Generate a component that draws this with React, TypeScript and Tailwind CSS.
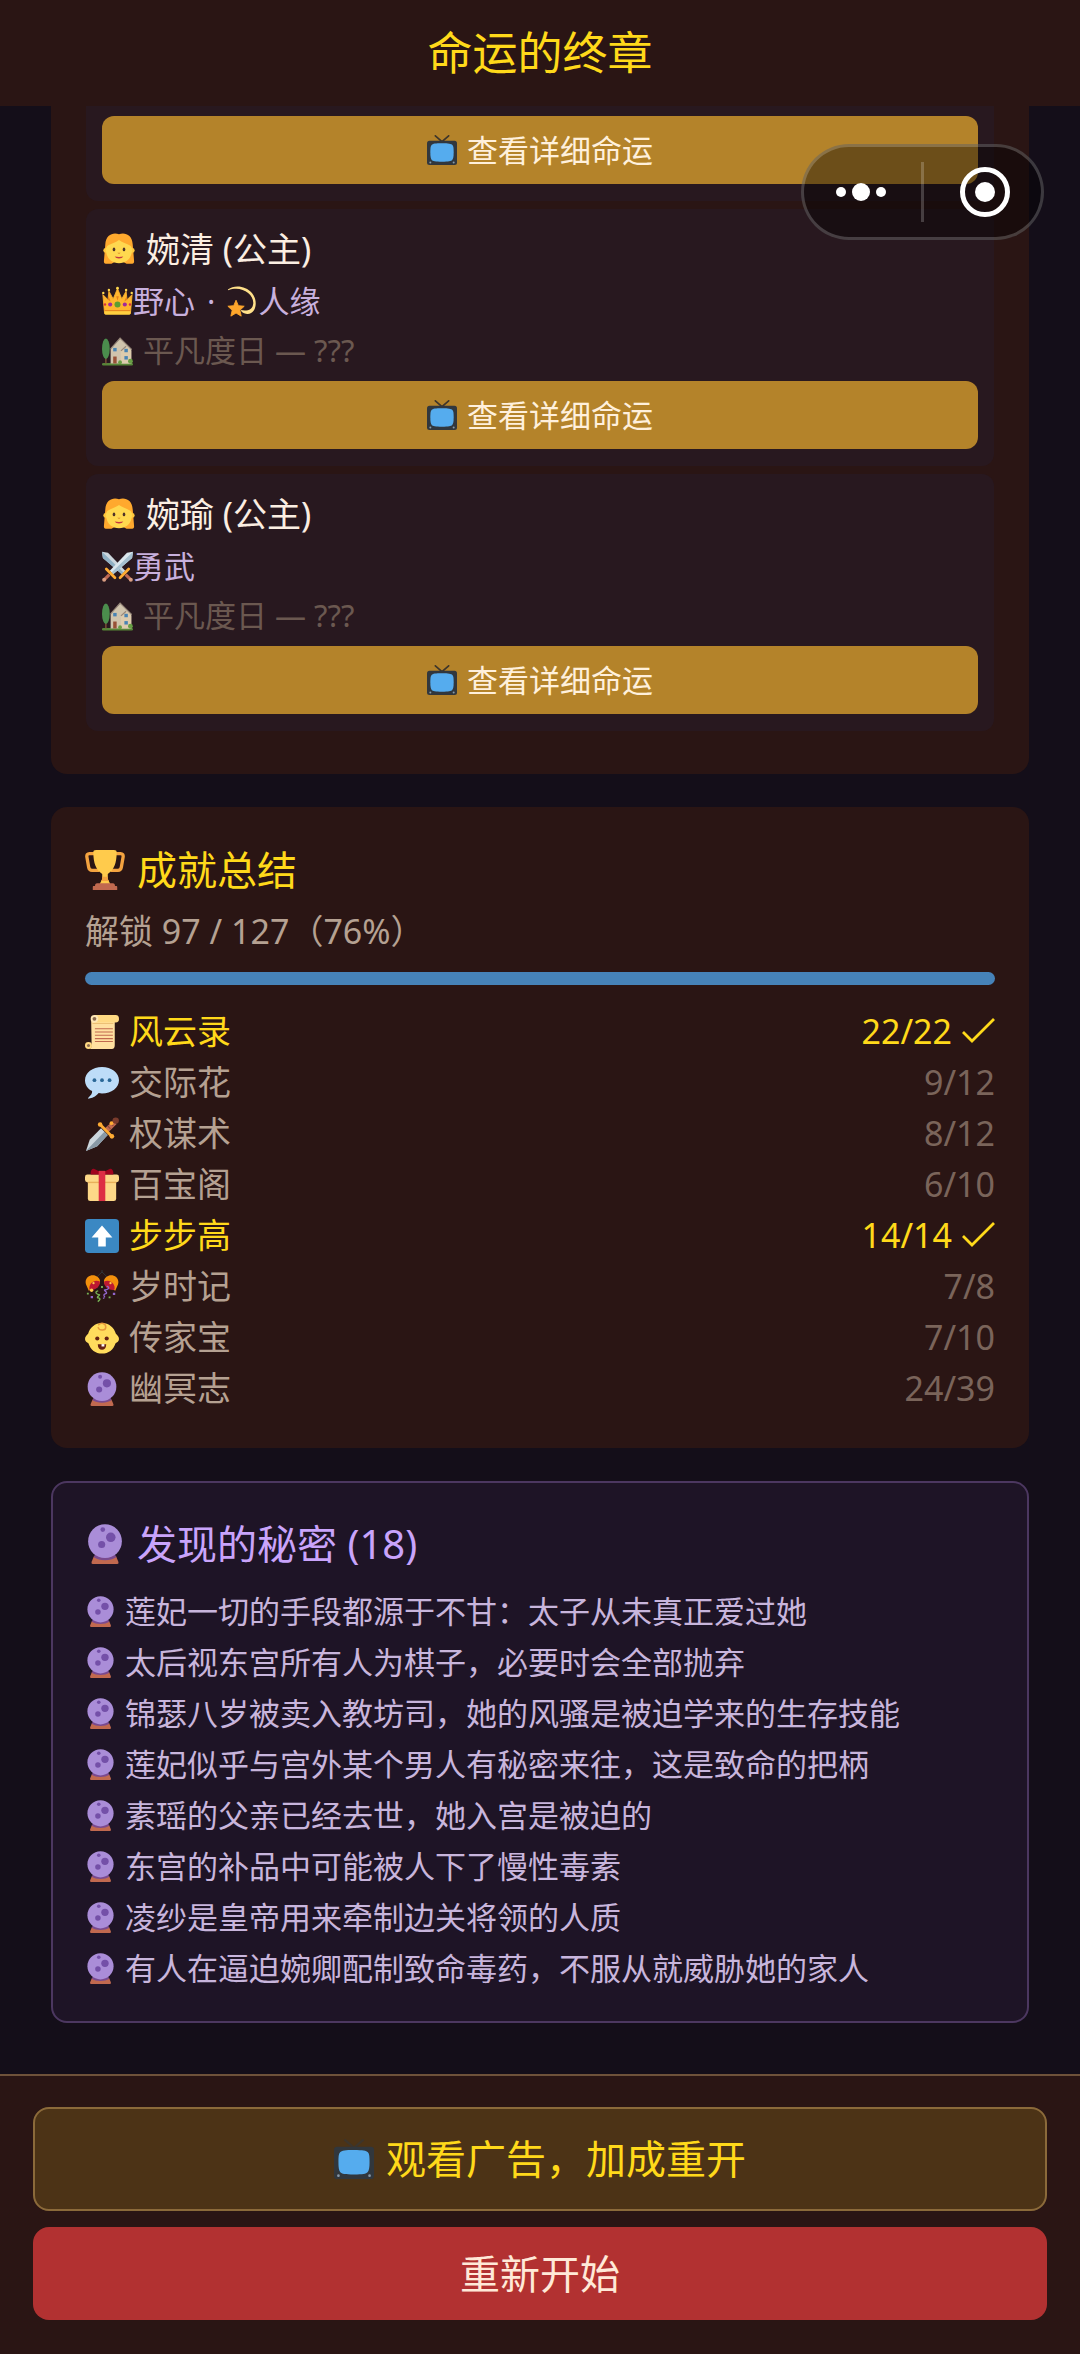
import type { ReactNode } from 'react'
import clsx from 'clsx'

type IconProps = { className?: string }

function Emoji({ className = 'size-[34px]', children }: IconProps & { children: ReactNode }) {
  return (
    <svg viewBox="0 0 36 36" className={clsx('shrink-0', className)} aria-hidden="true">
      {children}
    </svg>
  )
}

function Tv({ className }: IconProps) {
  return (
    <Emoji className={className}>
      <path d="M10 1l8 7 8-7" fill="none" stroke="#3d352b" strokeWidth="2" strokeLinecap="round" />
      <rect x="0" y="7" width="36" height="29" rx="3" fill="#31373d" />
      <path
        d="M18 10c8 0 11 .6 12.500 2S32 16.500 32 21s-.4 7.500-1.800 9S26 32 18 32s-11-.6-12.300-2S4 25.500 4 21s0-7.500 1.500-9S10 10 18 10z"
        fill="#55acee"
      />
      <circle cx="4" cy="33" r="1.200" fill="#8899a6" />
      <circle cx="32" cy="33" r="1.200" fill="#8899a6" />
    </Emoji>
  )
}

function Girl({ className }: IconProps) {
  return (
    <Emoji className={className}>
      <path
        d="M18 2.500C12 0 4 3 3.500 13L2 31c0 1.500.5 2.500 2 2.500h6l8-4 8 4h6c1.500 0 2-1 2-2.500L32.500 13C32 3 24 0 18 2.500z"
        fill="#ffa92e"
      />
      <circle cx="4" cy="19.500" r="2.600" fill="#ffc83d" />
      <circle cx="32" cy="19.500" r="2.600" fill="#ffc83d" />
      <path
        d="M18 8.500C15 11 8 12.500 5 15.500c-1 2-1 4-.500 6.500C6 29 11 33 18 33s12-4 13.500-11c.5-2.500.5-4.500-.5-6.500-3-3-10-4.500-13-7z"
        fill="#ffd84f"
      />
      <ellipse cx="12.700" cy="18.500" rx="1.400" ry="2" fill="#50342a" />
      <ellipse cx="23.300" cy="18.500" rx="1.400" ry="2" fill="#50342a" />
      <path d="M16.200 22h3.600L18 23.300z" fill="#d98b2b" />
      <path d="M13.500 26c2.700.7 6.300.7 9 0-1.200 2.800-7.800 2.800-9 0z" fill="#c5383f" />
    </Emoji>
  )
}

function Crown({ className }: IconProps) {
  return (
    <Emoji className={className}>
      <path
        d="M3 32L1 10l6 6 1-10 5 9 5-12 5 12 5-9 1 10 6-6-2 22z"
        fill="#ffb52e"
        stroke="#ffb52e"
        strokeWidth="1"
        strokeLinejoin="round"
      />
      <path d="M7 12l2 3 1 3-3-2zM29 12l-2 3-1 3 3-2zM16.500 12h3l-1.500 5z" fill="#e4801d" />
      <circle cx="1.500" cy="8" r="1.400" fill="#ffd84f" />
      <circle cx="8" cy="4.500" r="1.400" fill="#ffd84f" />
      <circle cx="18" cy="2.500" r="1.600" fill="#ffd84f" />
      <circle cx="28" cy="4.500" r="1.400" fill="#ffd84f" />
      <circle cx="34.500" cy="8" r="1.400" fill="#ffd84f" />
      <circle cx="18" cy="21.500" r="3.500" fill="#5c9e31" />
      <circle cx="9.500" cy="21.500" r="2.400" fill="#a1299c" />
      <circle cx="26.500" cy="21.500" r="2.400" fill="#a1299c" />
      <circle cx="3.500" cy="21.500" r="1.400" fill="#d8343b" />
      <circle cx="32.500" cy="21.500" r="1.400" fill="#d8343b" />
      <path d="M3 28.500h30V32q0 1.500-1.500 1.500h-27Q3 33.500 3 32z" fill="#ffcf3f" />
      <path d="M3 28h30v1.200H3z" fill="#e4801d" />
    </Emoji>
  )
}

function Dizzy({ className }: IconProps) {
  return (
    <Emoji className={className}>
      <path
        d="M1 4C9-2 22 0 29 8c7.500 9 5 24-5 24.500-4 .2-7-1.500-8-4.500 7 1.500 14 0 14.500-8C31 9 16-1 1.500 5z"
        fill="#ffe08a"
      />
      <path
        d="M10.500 16.500l2.700 6.300 6.800.7-5 4.600 1.500 6.900-6-3.600L4.500 35 6 28.100l-5-4.600 6.800-.7z"
        fill="#ffa62b"
        stroke="#ffa62b"
        strokeLinejoin="round"
      />
    </Emoji>
  )
}

function Swords({ className }: IconProps) {
  return (
    <Emoji className={className}>
      <path d="M0 1l7 1 20 21-4 4L1 8z" fill="#ccd6dd" />
      <path d="M0 1l25 24-2 2L1 8z" fill="#8fb0c4" />
      <path d="M36 1l-7 1L9 23l4 4L35 8z" fill="#dbe7ee" />
      <path d="M36 1L11 25l2 2L35 8z" fill="#a5c0d0" />
      <path d="M5 21l10 10M31 21L21 31" stroke="#ffac33" strokeWidth="3.200" strokeLinecap="round" />
      <path d="M8.500 27.500L3 33M27.500 27.500L33 33" stroke="#bf6952" strokeWidth="3.600" />
      <circle cx="2.500" cy="33.500" r="2.300" fill="#d99e82" />
      <circle cx="33.500" cy="33.500" r="2.300" fill="#d99e82" />
    </Emoji>
  )
}

function House({ className }: IconProps) {
  return (
    <Emoji className={className}>
      <rect x="0" y="32.500" width="36" height="3" rx="1.500" fill="#5c913b" />
      <path d="M4.500 20v13" stroke="#8a5a3c" strokeWidth="1.600" />
      <ellipse cx="4.500" cy="16" rx="4.500" ry="12" fill="#4f9a52" />
      <path d="M10 16L21 4l13 12v17H10z" fill="#e3d7bd" />
      <path d="M22 18l6-5 6 5v15H22z" fill="#f1dfbd" />
      <path d="M10 16L21 3.500 34.500 17M22 18.500l6-5.500" fill="none" stroke="#a39384" strokeWidth="1.400" />
      <rect x="13" y="25" width="4" height="8" fill="#a4583a" />
      <rect x="13" y="15" width="4" height="4" fill="#4c8fc4" />
      <rect x="26" y="16" width="4" height="4" fill="#4c8fc4" />
      <rect x="26" y="24.500" width="4" height="4" fill="#4c8fc4" />
      <circle cx="21" cy="31.500" r="2.200" fill="#6fae4a" />
      <circle cx="33" cy="30.500" r="2.800" fill="#6fae4a" />
    </Emoji>
  )
}

function Trophy({ className }: IconProps) {
  return (
    <Emoji className={className}>
      <path
        d="M10 3.300H4c-1.800 0-2.600 1.200-2.300 3L3.300 15.500c.3 1.700 1.300 2.800 3 2.800H13M26 3.300h6c1.800 0 2.600 1.200 2.300 3l-1.600 9.200c-.3 1.700-1.300 2.800-3 2.800H23"
        fill="none"
        stroke="#f4a340"
        strokeWidth="3"
      />
      <path d="M10 0h16c1.800 0 2.500.6 2.500 2C28.500 12 26 18 20.500 21.500v4.500L23 31H13l2.500-5v-4.500C10 18 7.500 12 7.500 2 7.500.6 8.200 0 10 0z" fill="#ffcb4c" />
      <path d="M15.500 24h5v2l1 2h-7l1-2z" fill="#f4a340" />
      <path d="M11 30h14c1.500 0 2 1 2 2.500h1c.8 0 1 .5 1 1V36H7v-2.500c0-.5.2-1 1-1h1c0-1.500.5-2.500 2-2.500z" fill="#c1694f" />
    </Emoji>
  )
}

function Scroll({ className }: IconProps) {
  return (
    <Emoji className={className}>
      <path d="M6.500 4h25v28c0 2.500-1 4-3 4H4c3 0 3-3 3-5z" fill="#ffe0a0" />
      <circle cx="3.700" cy="32.300" r="3.700" fill="#ffd983" />
      <circle cx="3.700" cy="32.300" r="1.600" fill="#8a6a4f" />
      <path d="M10 0h22.500a3.500 4 0 0 1 0 8H10z" fill="#ffd983" />
      <circle cx="10" cy="4" r="4" fill="#ffe8b6" />
      <circle cx="10" cy="4" r="2" fill="#8a6a4f" />
      <path d="M8 9h22" stroke="#e6b566" strokeWidth=".8" />
      <path d="M10.500 14.500h19M10.500 18h19M10.500 21.500h19M10.500 25h19M10.500 28h19" stroke="#c1694f" strokeWidth="1.200" />
    </Emoji>
  )
}

function Speech({ className }: IconProps) {
  return (
    <Emoji className={className}>
      <path
        d="M18 1C8 1 0 7 0 15c0 5 3 9.500 7.500 11.500.5 2.500-1.500 5-4 7-.5.800 0 1.200.8 1 5-.8 8-3.500 10.200-6 1.100.3 2.300.5 3.500.5 10 0 18-6 18-14S28 1 18 1z"
        fill="#bddcf8"
      />
      <circle cx="10" cy="15" r="2" fill="#2a6797" />
      <circle cx="18" cy="15" r="2" fill="#2a6797" />
      <circle cx="26" cy="15" r="2" fill="#2a6797" />
    </Emoji>
  )
}

function Dagger({ className }: IconProps) {
  return (
    <Emoji className={className}>
      <path d="M1 36l4-12L17 12l7 7L13 31z" fill="#ccd6dd" />
      <path d="M1 36l19.500-20.500L24 19 13 31z" fill="#8899a6" />
      <path d="M21 12l9-8 3.500 3.500L25 16z" fill="#c1694f" />
      <path d="M24 9.500l3 3M27 6.500l3 3" stroke="#8a4b38" strokeWidth="1.200" />
      <circle cx="32.500" cy="3.800" r="3.400" fill="#7a3b2c" />
      <path d="M16.500 8.500L28 20" stroke="#ffac33" strokeWidth="3" />
      <circle cx="16" cy="8" r="2.400" fill="#ffac33" />
      <circle cx="28.500" cy="20.500" r="2.400" fill="#ffac33" />
      <circle cx="28" cy="6.500" r="2" fill="#ffac33" />
    </Emoji>
  )
}

function Gift({ className }: IconProps) {
  return (
    <Emoji className={className}>
      <path d="M3 14h30v18.500q0 2.500-2.500 2.500h-25Q3 35 3 32.500z" fill="#fdd888" />
      <path d="M2.500 7h31Q36 7 36 9.500v3q0 2.500-2.500 2.500h-31Q0 15 0 12.500v-3Q0 7 2.500 7z" fill="#fdd888" />
      <path d="M3 14.500h30V16H3z" fill="#e8b05a" />
      <path d="M6 5c0-3 2-5 4-4l8 4 8-4c2-1 4 1 4 4v2H6z" fill="#a0041e" />
      <path d="M14.500 3h7v32h-7z" fill="#dd2e44" />
    </Emoji>
  )
}

function UpArrow({ className }: IconProps) {
  return (
    <Emoji className={className}>
      <rect width="36" height="36" rx="4" fill="#3b88c3" />
      <path d="M18 7l11 12.500h-7V29h-8v-9.500H7z" fill="#fff" />
    </Emoji>
  )
}

function Confetti({ className }: IconProps) {
  return (
    <Emoji className={className}>
      <path d="M18 0v3M18 2l-5 5M18 2l5 5" stroke="#31373d" strokeWidth="1" fill="none" />
      <path d="M1 15C-1 8 6 4 11 6s6 6 4 9L4 22z" fill="#f4900c" />
      <path d="M5 21c-2-5 4-12 10.500-9C17 17 11 22 5 21z" fill="#be1931" />
      <path d="M35 15c2-7-5-11-10-9s-6 6-4 9l11 7z" fill="#f4900c" />
      <path d="M31 21c2-5-4-12-10.500-9C19 17 25 22 31 21z" fill="#be1931" />
      <circle cx="7" cy="21.500" r="1.800" fill="#ffcc4d" />
      <circle cx="9" cy="14" r="1.200" fill="#ffcc4d" />
      <circle cx="27" cy="14" r="1.200" fill="#ffcc4d" />
      <path d="M14 22c-5 1-1 4 1 4s-4 3-1 3.500 2 2-.5 4" stroke="#77b255" strokeWidth="1.400" fill="none" />
      <path d="M23 17c5 2 0 4-2 4s4 3 1 4-2 2-1 4" stroke="#9266cc" strokeWidth="1.400" fill="none" />
      <path d="M2 24h2v2H2zM17 17h2v2h-2zM25 28h2v2h-2z" fill="#77b255" />
      <path d="M6 27.500h2.500V30H6zM29.500 24H32v2.500h-2.500zM19 29h1.500v1.500H19z" fill="#9266cc" />
    </Emoji>
  )
}

function Baby({ className }: IconProps) {
  return (
    <Emoji className={className}>
      <path d="M18 2c7.500 0 13 5 14.700 11.500C34 15 36 16.500 36 19s-2 3.500-3.600 4.500C30 30.500 25 34.500 18 34.500S6 30.500 3.600 23.500C2 22.500 0 21.500 0 19s2-4 3.300-5.500C5 7 10.500 2 18 2z" fill="#ffdc5d" />
      <path d="M14 7c1 3.500 8 3.500 8-.5C22 2 17 1.500 14.500 4" fill="none" stroke="#e69a3c" strokeWidth="1.600" strokeLinecap="round" />
      <circle cx="13" cy="18.500" r="2.200" fill="#662113" />
      <circle cx="23" cy="18.500" r="2.200" fill="#662113" />
      <path d="M13.500 24.500h9c0 4-2 6-4.500 6s-4.500-2-4.500-6z" fill="#662113" />
      <path d="M17.500 24.500h3v2.500h-3z" fill="#fff" />
    </Emoji>
  )
}

function CrystalBall({ className }: IconProps) {
  return (
    <Emoji className={className}>
      <path d="M8 29h20l2 5c.4 1.300 0 2-1 2H7c-1 0-1.400-.7-1-2z" fill="#c1694f" />
      <path d="M8 30c5 3.500 15 3.500 20 0l-1-3H9z" fill="#7a4a8f" />
      <circle cx="18" cy="15.500" r="15.200" fill="#aa8dd8" />
      <circle cx="23.200" cy="12" r="4.300" fill="#7450a8" />
      <circle cx="15" cy="18.500" r="3.200" fill="#7450a8" />
      <circle cx="16" cy="5" r="2.100" fill="#7450a8" />
    </Emoji>
  )
}

function Check() {
  return (
    <svg viewBox="0 0 34 34" className="size-[34px] shrink-0" role="img" aria-label="✓">
      <path d="M2 17l9 9L33 4" fill="none" stroke="currentColor" strokeWidth="2.800" />
    </svg>
  )
}

function FateButton() {
  return (
    <button
      type="button"
      className="flex h-[68px] w-full items-center justify-center gap-[10px] rounded-xl bg-[#b4832a] text-[31px] text-[#fff0dc]"
    >
      <Tv className="size-[30px]" />
      <span>查看详细命运</span>
    </button>
  )
}

const princesses = [
  { name: '婉清 (公主)', traits: [{ icon: Crown, label: '野心' }, { icon: Dizzy, label: '人缘' }] },
  { name: '婉瑜 (公主)', traits: [{ icon: Swords, label: '勇武' }] },
]

const achievements = [
  { icon: Scroll, name: '风云录', score: '22/22', done: true },
  { icon: Speech, name: '交际花', score: '9/12', done: false },
  { icon: Dagger, name: '权谋术', score: '8/12', done: false },
  { icon: Gift, name: '百宝阁', score: '6/10', done: false },
  { icon: UpArrow, name: '步步高', score: '14/14', done: true },
  { icon: Confetti, name: '岁时记', score: '7/8', done: false },
  { icon: Baby, name: '传家宝', score: '7/10', done: false },
  { icon: CrystalBall, name: '幽冥志', score: '24/39', done: false },
]

const secrets = [
  '莲妃一切的手段都源于不甘：太子从未真正爱过她',
  '太后视东宫所有人为棋子，必要时会全部抛弃',
  '锦瑟八岁被卖入教坊司，她的风骚是被迫学来的生存技能',
  '莲妃似乎与宫外某个男人有秘密来往，这是致命的把柄',
  '素瑶的父亲已经去世，她入宫是被迫的',
  '东宫的补品中可能被人下了慢性毒素',
  '凌纱是皇帝用来牵制边关将领的人质',
  '有人在逼迫婉卿配制致命毒药，不服从就威胁她的家人',
]

function PrincessCard({ name, traits }: (typeof princesses)[number]) {
  return (
    <article className="rounded-xl bg-[#28181f] px-4 pt-4 pb-[17px]">
      <h3 className="flex h-12 items-center gap-[10px] text-[34px] text-[#fbeee2]">
        <Girl />
        {name}
      </h3>
      <p className="mt-[6px] flex h-11 items-center text-[31px] text-[#c8b0dd]">
        {traits.map(({ icon: Icon, label }, i) => (
          <span key={label} className="flex items-center">
            {i > 0 && <span className="px-1 whitespace-pre"> · </span>}
            <Icon className="size-[31px]" />
            {label}
          </span>
        ))}
      </p>
      <p className="mt-[5px] mb-[9px] flex h-11 items-center gap-[10px] text-[31px] text-[#6b5850]">
        <House className="size-[31px] opacity-90" />
        平凡度日 — ???
      </p>
      <FateButton />
    </article>
  )
}

function Capsule() {
  return (
    <div className="absolute top-36 right-9 flex h-24 w-[243px] items-center rounded-full border-[3px] border-white/20 bg-black/40">
      <button type="button" aria-label="更多" className="flex h-full flex-1 items-center justify-center gap-[6px] pr-1">
        <span className="size-[10px] rounded-full bg-white" />
        <span className="size-[18px] rounded-full bg-white" />
        <span className="size-[10px] rounded-full bg-white" />
      </button>
      <span className="h-[60px] w-[3px] bg-white/20" />
      <button type="button" aria-label="关闭" className="flex h-full flex-1 items-center justify-center pl-1">
        <span className="flex size-[50px] items-center justify-center rounded-full border-[5px] border-white">
          <span className="size-5 rounded-full bg-white" />
        </span>
      </button>
    </div>
  )
}

export default function App() {
  return (
    <div className="relative flex min-h-screen flex-col bg-[#140e19] font-['Noto_Sans','Noto_Sans_CJK_SC',sans-serif]">
      <header className="flex h-[106px] items-center justify-center bg-[#2a1514]">
        <h1 className="text-[45px] text-[#ffd91a]">命运的终章</h1>
      </header>

      <main className="flex flex-col gap-[33px] px-[51px] pb-[51px]">
        <section className="flex flex-col gap-2 rounded-b-2xl bg-[#2a1514] px-[35px] pb-[43px]">
          <div className="rounded-b-xl bg-[#28181f] px-4 pt-[10px] pb-[17px]">
            <FateButton />
          </div>
          {princesses.map((p) => (
            <PrincessCard key={p.name} {...p} />
          ))}
        </section>

        <section className="rounded-2xl bg-[#2a1514] p-[34px]">
          <h2 className="flex h-[58px] items-center gap-3 text-[40px] text-[#ffd91a]">
            <Trophy className="size-10" />
            成就总结
          </h2>
          <p className="mt-[7px] flex h-[51px] items-center text-[34px] text-[#b5a192]">解锁 97 / 127（76%）</p>
          <div className="mt-[15px] h-[13px] rounded-full bg-[#4682b8]" />
          <ul className="mt-[21px] text-[34px]">
            {achievements.map(({ icon: Icon, name, score, done }) => (
              <li key={name} className="flex h-[51px] items-center justify-between">
                <span className={clsx('flex items-center gap-[10px]', done ? 'text-[#ffd91a]' : 'text-[#b5a192]')}>
                  <Icon />
                  {name}
                </span>
                <span className={clsx('flex items-center gap-[9px]', done ? 'text-[#ffd91a]' : 'text-[#7a645a]')}>
                  {score}
                  {done && <Check />}
                </span>
              </li>
            ))}
          </ul>
        </section>

        <section className="rounded-2xl border-2 border-[#4c3760] bg-[#1e1426] px-8 pt-8 pb-[27px]">
          <h2 className="flex h-[58px] items-center gap-3 text-[40px] text-[#c9a4fb]">
            <CrystalBall className="size-10" />
            发现的秘密 (18)
          </h2>
          <ul className="mt-[13px] text-[31px] text-[#c8b5dc]">
            {secrets.map((secret) => (
              <li key={secret} className="flex h-[51px] items-center gap-[9px]">
                <CrystalBall className="size-[31px]" />
                {secret}
              </li>
            ))}
          </ul>
        </section>
      </main>

      <footer className="mt-auto flex flex-col gap-4 border-t-2 border-[#6e523a] bg-[#2a1514] px-[33px] pt-[31px] pb-[34px] text-[40px]">
        <button
          type="button"
          className="flex h-[104px] items-center justify-center gap-3 rounded-2xl border-2 border-[#8b6a3a] bg-[#4c3316] text-[#ffd91a]"
        >
          <Tv className="size-10" />
          <span>观看广告，加成重开</span>
        </button>
        <button type="button" className="h-[93px] rounded-2xl bg-[#b23131] text-[#ffe9d8]">
          重新开始
        </button>
      </footer>

      <Capsule />
    </div>
  )
}
